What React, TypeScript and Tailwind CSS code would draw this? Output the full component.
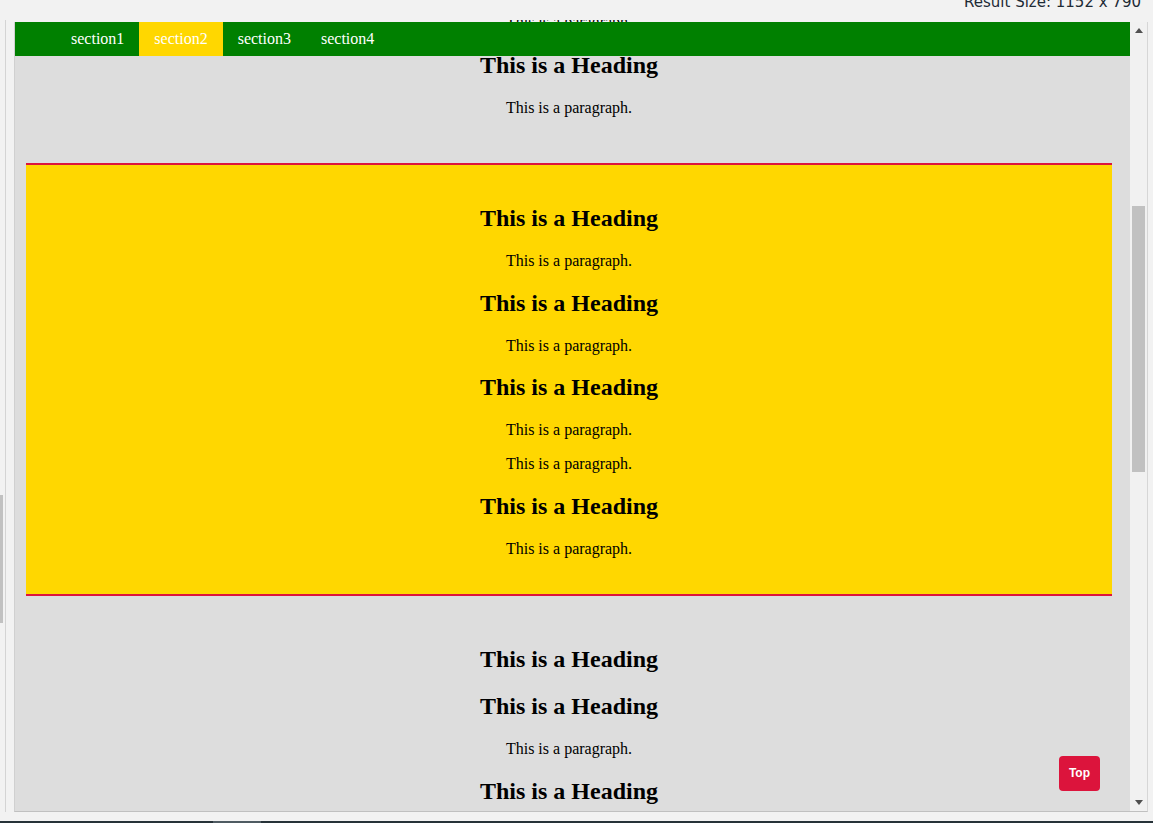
// Result pane with a fixed nav, a highlighted section and a "Top" button
const SERIF = "font-['Liberation_Serif','Times_New_Roman',serif]";

const NAV = ["section1", "section2", "section3", "section4"];

function Heading() {
  return <h2 className="text-[24px] font-bold my-[19.92px]">This is a Heading</h2>;
}

function Para() {
  return <p className="text-[16px] my-[16px]">This is a paragraph.</p>;
}

function Arrow({ down }: { down?: boolean }) {
  return (
    <div className="h-[17px] flex items-center justify-center">
      <svg width="8" height="5" viewBox="0 0 8 5">
        <polygon points={down ? "0,0 8,0 4,5" : "0,5 8,5 4,0"} fill="#505050" />
      </svg>
    </div>
  );
}

export default function App() {
  return (
    <div className={`w-[1153px] h-[823px] bg-[#f2f2f2] overflow-hidden flex flex-col leading-[normal] ${SERIF}`}>
      {/* top strip: result size + the sliver of content above the nav */}
      <div className="h-[22px] flex flex-col shrink-0">
        <div className="h-[20px] shrink-0 overflow-hidden flex justify-end pr-[12px]">
          <span className="-mt-[7px] text-[15px] leading-[18px] text-[#1e2b36] font-['DejaVu_Sans','Verdana',sans-serif] whitespace-pre">
            Result Size: 1152 x 790
          </span>
        </div>
        <div className="h-[2px] shrink-0 overflow-hidden pl-[26px]">
          <div className="w-[1086px] text-center pt-px">
            <p className="-mt-[8px] text-[16px] text-black">This is a paragraph.</p>
          </div>
        </div>
      </div>

      <div className="h-[790px] flex shrink-0">
        {/* left panel edge */}
        <div className="w-[6px] border-r border-[#d4d4d4] bg-[#f2f2f2] flex flex-col -mt-[2px]">
          <div className="h-[475px]" />
          <div className="w-[3px] h-[128px] bg-[#c1c1c1]" />
        </div>

        {/* result frame */}
        <div className="ml-[8px] w-[1134px] flex border-l border-r border-b border-l-[#d0d0d0] border-r-[#d6d6d6] border-b-[#c0c0c0] bg-[#dddddd]">
          <div className="w-[1115px] flex flex-col">
            <nav className="h-[34px] bg-[#008000] flex pl-[41px] shrink-0">
              {NAV.map((n) => (
                <a
                  key={n}
                  className={`px-[15px] flex items-center text-[16px] text-white ${
                    n === "section2" ? "bg-[#ffd700]" : ""
                  }`}
                >
                  {n}
                </a>
              ))}
            </nav>

            <div className="flex-1 overflow-hidden relative text-black">
              <div className="-mt-[4px]">
                <section className="ml-[11px] mr-[18px] text-center pb-[20px] mb-[10px]">
                  <h2 className="text-[24px] font-bold mt-0 mb-[19.92px]">This is a Heading</h2>
                  <Para />
                </section>

                <section className="ml-[11px] mr-[18px] text-center bg-[#ffd700] border-y-2 border-[#dc143c] py-[20px]">
                  <Heading />
                  <Para />
                  <Heading />
                  <Para />
                  <Heading />
                  <Para />
                  <Para />
                  <Heading />
                  <Para />
                </section>

                <section className="ml-[11px] mr-[18px] text-center mt-[10px] py-[20px]">
                  <Heading />
                  <Heading />
                  <Para />
                  <Heading />
                  <Para />
                </section>
              </div>

              <button className="absolute right-[30px] bottom-[20px] bg-[#dc143c] text-white rounded-[4px] px-[10px] py-[10px] text-[12px] leading-[15px] font-bold font-['Liberation_Sans',Arial,sans-serif]">
                Top
              </button>
            </div>
          </div>

          {/* scrollbar */}
          <div className="w-[17px] bg-[#f1f1f1] flex flex-col">
            <Arrow />
            <div className="flex-1 flex flex-col pt-[167px] px-[2px]">
              <div className="h-[266px] bg-[#c1c1c1]" />
            </div>
            <Arrow down />
          </div>
        </div>
      </div>

      {/* bottom bar */}
      <div className="mt-[9px] h-[2px] bg-[#263238] flex shrink-0">
        <div className="ml-[213px] w-[48px] bg-[#4f5b62]" />
      </div>
    </div>
  );
}
